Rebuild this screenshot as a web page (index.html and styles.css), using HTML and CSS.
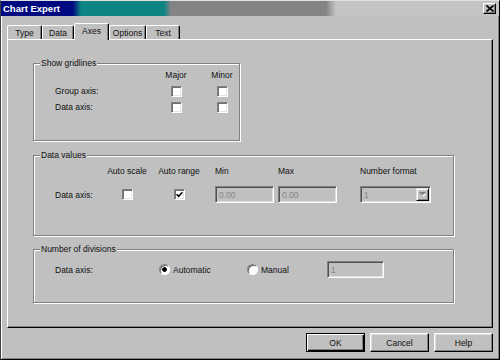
FILE: index.html
```html
<!DOCTYPE html>
<html>
<head>
<meta charset="utf-8">
<title>Chart Expert</title>
<link rel="stylesheet" href="styles.css">
</head>
<body>
<div class="window">
  <div class="titlebar">
    <span class="title">Chart Expert</span>
    <span class="close"><svg width="8" height="7" viewBox="0 0 8 7"><path d="M0.5 0.5 L7.5 6.5 M7.5 0.5 L0.5 6.5" stroke="#000" stroke-width="1.6" fill="none"/></svg></span>
  </div>
  <div class="main">
    <div class="tabs">
      <div class="tab">Type</div>
      <div class="tab">Data</div>
      <div class="tab active">Axes</div>
      <div class="tab">Options</div>
      <div class="tab">Text</div>
    </div>
    <div class="panel">
      <div class="group gridlines">
        <span class="group-title">Show gridlines</span>
        <div class="grid-table">
          <span></span><span>Major</span><span>Minor</span>
          <span class="row-label">Group axis:</span><span class="check"></span><span class="check"></span>
          <span class="row-label">Data axis:</span><span class="check"></span><span class="check"></span>
        </div>
      </div>

      <div class="group values">
        <span class="group-title">Data values</span>
        <div class="vrow vhead">
          <span class="c-label"></span>
          <span class="c-scale">Auto scale</span>
          <span class="c-range">Auto range</span>
          <span class="c-min">Min</span>
          <span class="c-max">Max</span>
          <span class="c-fmt">Number format</span>
        </div>
        <div class="vrow vdata">
          <span class="c-label">Data axis:</span>
          <span class="c-scale"><span class="check"></span></span>
          <span class="c-range"><span class="check"><svg width="7" height="7" viewBox="0 0 7 7"><path d="M0.6 3.2 L2.6 5.4 L6.4 1.2" stroke="#000" stroke-width="1.6" fill="none"/></svg></span></span>
          <span class="c-min field">0.00</span>
          <span class="c-max field">0.00</span>
          <span class="c-fmt field combo"><span>1</span><span class="combo-btn"><svg width="7" height="5" viewBox="0 0 7 5"><path d="M1 1 H6 L3.5 3.5 Z" fill="#fff" transform="translate(1 1)"/><path d="M0 0 H7 L3.5 3.5 Z" fill="#808080"/></svg></span></span>
        </div>
      </div>

      <div class="group divisions">
        <span class="group-title">Number of divisions</span>
        <div class="drow">
          <span class="d-label">Data axis:</span>
          <span class="opt opt-auto"><span class="radio on"></span>Automatic</span>
          <span class="opt opt-manual"><span class="radio"></span>Manual</span>
          <span class="field d-input">1</span>
        </div>
      </div>
    </div>
    <div class="buttons">
      <button class="btn default">OK</button>
      <button class="btn">Cancel</button>
      <button class="btn">Help</button>
    </div>
  </div>
</div>
</body>
</html>
```
FILE: styles.css
```css
* { box-sizing: border-box; }
html, body { margin: 0; padding: 0; }
body {
  width: 500px;
  height: 360px;
  overflow: hidden;
  background: #c0c0c0;
  font-family: "Liberation Sans", Arial, sans-serif;
  font-size: 8.5px;
  color: #111;
}
.window {
  width: 500px;
  height: 360px;
  border: 1px solid;
  border-color: #dfdfdf #000 #000 #404040;
  box-shadow: inset 1px 1px #fff, inset -1px -1px #808080;
  background: #c0c0c0;
  display: flex;
  flex-direction: column;
}
.titlebar {
  height: 15px;
  flex: none;
  display: flex;
  align-items: center;
  justify-content: space-between;
  padding: 0 3px 0 2px;
  background: linear-gradient(to right, #000a80 0, #000a80 72px, #0c8484 80px, #0c8484 163px, #848484 170px, #848484 325px, #c4c4c4 335px);
}
.title {
  color: #fff;
  font-weight: bold;
  font-size: 9.5px;
}
.close {
  width: 13px;
  height: 11px;
  background: #c0c0c0;
  border: 1px solid;
  border-color: #fff #000 #000 #fff;
  box-shadow: inset -1px -1px #808080;
  display: flex;
  align-items: center;
  justify-content: center;
}
.main {
  flex: 1;
  padding: 7px 6px 0 6px;
  display: flex;
  flex-direction: column;
}
.tabs {
  display: grid;
  grid-template-columns: 35px 32px 35px 37px 34px;
  height: 16px;
  align-items: end;
}
.tab {
  height: 14px;
  border: 1px solid;
  border-bottom: none;
  border-color: #fff #000 transparent #fff;
  border-radius: 2px 2px 0 0;
  box-shadow: inset -1px 0 #808080;
  display: flex;
  align-items: center;
  justify-content: center;
}
.tab.active {
  height: 17px;
  margin-bottom: -1px;
  padding-bottom: 3px;
  position: relative;
  z-index: 1;
  background: #c0c0c0;
}
.panel {
  height: 289px;
  border: 1px solid;
  border-color: #fff #000 #000 #fff;
  box-shadow: inset -1px -1px #808080;
  padding: 23px 0 0 25px;
}
.group {
  position: relative;
  border: 1px solid #808080;
  box-shadow: inset 1px 1px #fff, 1px 1px #fff;
}
.group-title {
  position: absolute;
  top: -6px;
  left: 6px;
  padding: 0 1px;
  line-height: 11px;
  background: #c0c0c0;
}
.gridlines {
  width: 207px;
  height: 78px;
  margin-bottom: 14px;
  padding: 3px 0 0 21px;
}
.values {
  width: 421px;
  height: 81px;
  margin-bottom: 13px;
  padding: 9px 0 0 21px;
}
.divisions {
  width: 421px;
  height: 54px;
  padding: 11px 0 0 21px;
}
.grid-table {
  display: grid;
  grid-template-columns: 89px 28px 28px;
  column-gap: 18px;
  grid-auto-rows: 16px;
  align-items: center;
  justify-items: center;
}
.row-label { justify-self: start; }
.check {
  width: 11px;
  height: 11px;
  background: #fff;
  border: 1px solid;
  border-color: #808080 #fff #fff #808080;
  box-shadow: inset 1px 1px #707070, inset -1px -1px #e4e4e4;
  display: flex;
  align-items: center;
  justify-content: center;
}
.vrow {
  display: flex;
  align-items: center;
}
.vhead {
  height: 12px;
  margin-bottom: 9px;
}
.vdata { height: 17px; }
.c-label { width: 52px; }
.c-scale {
  width: 40px;
  display: flex;
  justify-content: center;
  white-space: nowrap;
}
.c-range {
  width: 42px;
  margin-left: 11px;
  display: flex;
  justify-content: center;
  white-space: nowrap;
}
.c-min { width: 59px; margin-left: 15px; }
.c-max { width: 59px; margin-left: 4px; }
.c-fmt { width: 71px; margin-left: 23px; white-space: nowrap; }
.field {
  height: 17px;
  border: 1px solid;
  border-color: #808080 #fff #fff #808080;
  box-shadow: inset 1px 1px #505050, inset -1px -1px #dfdfdf;
  background: #c0c0c0;
  color: #868686;
  padding-left: 3px;
  display: flex;
  align-items: center;
}
.combo {
  justify-content: space-between;
  padding: 1px 1px 1px 3px;
}
.combo-btn {
  width: 13px;
  height: 13px;
  border: 1px solid;
  border-color: #dfdfdf #000 #000 #dfdfdf;
  box-shadow: inset 1px 1px #fff, inset -1px -1px #808080;
  display: flex;
  align-items: center;
  justify-content: center;
}
.drow {
  display: flex;
  align-items: center;
  height: 17px;
}
.d-label { width: 104px; }
.opt {
  display: flex;
  align-items: center;
  gap: 3px;
}
.opt-auto { width: 88px; }
.opt-manual { width: 80px; }
.radio {
  width: 11px;
  height: 11px;
  border-radius: 50%;
  background: #fff;
  border: 1px solid;
  border-color: #808080 #fff #fff #808080;
  box-shadow: inset 1px 1px #606060;
}
.radio.on {
  background: radial-gradient(circle, #000 0, #000 2px, #fff 2.6px);
}
.d-input { width: 57px; }
.buttons {
  display: flex;
  justify-content: flex-end;
  gap: 5px;
  margin-top: 5px;
}
.btn {
  width: 59px;
  height: 19px;
  padding: 0;
  font: inherit;
  color: #111;
  background: #c0c0c0;
  border: 1px solid;
  border-color: #fff #000 #000 #fff;
  box-shadow: inset -1px -1px #808080, inset 1px 1px #dfdfdf;
  display: flex;
  align-items: center;
  justify-content: center;
}
.btn.default {
  border-color: #000;
  box-shadow: inset 1px 1px #fff, inset -1px -1px #000, inset -2px -2px #808080;
}
```
